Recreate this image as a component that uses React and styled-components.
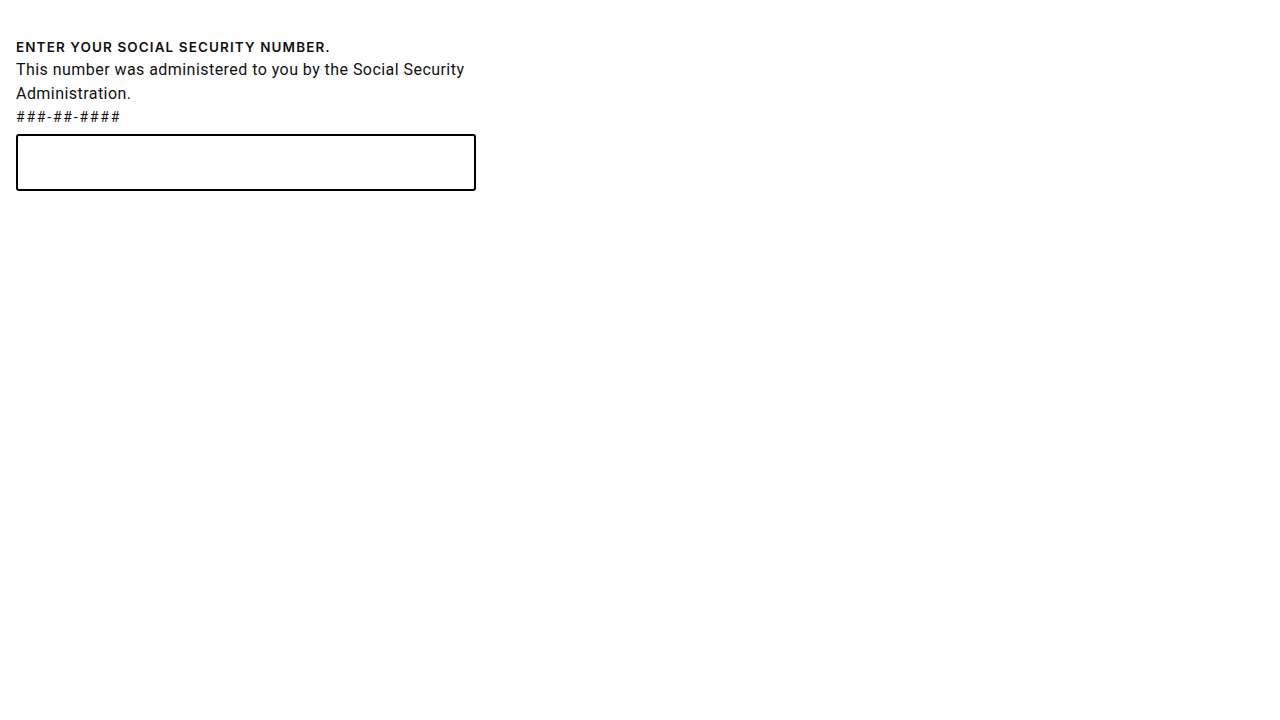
import styled, { createGlobalStyle } from 'styled-components'

const GlobalStyle = createGlobalStyle`
  body {
    margin: 0;
    background: #fff;
    font-family: Roboto, "Liberation Sans", sans-serif;
    color: #111;
  }
`

const App = () => {
  return (
    <>
      <GlobalStyle />
      <Page>
        <Field>
          <Label htmlFor="ssn">Enter your Social Security Number.</Label>
          <Hint>This number was administered to you by the Social Security Administration.</Hint>
          <Format>###-##-####</Format>
          <Input id="ssn" type="text" />
        </Field>
      </Page>
    </>
  )
}
export default App

const Page = styled.div`
  padding: 37px 16px 16px;
`

const Field = styled.div`
  display: flex;
  flex-direction: column;
  width: 460px;
`

const Label = styled.label`
  font-family: Inter, "Open Sans", sans-serif;
  font-size: 13.5px;
  font-weight: 600;
  line-height: 21px;
  text-transform: uppercase;
  letter-spacing: 1.1px;
  color: #111;
`

const Hint = styled.p`
  margin: 0;
  font-size: 16px;
  line-height: 24px;
  letter-spacing: 0.45px;
  color: #111;
`

const Format = styled.span`
  font-size: 14px;
  line-height: 23px;
  letter-spacing: 1.8px;
  color: #111;
`

const Input = styled.input`
  box-sizing: border-box;
  margin-top: 5px;
  width: 460px;
  height: 57px;
  border: 2px solid #000;
  border-radius: 3px;
  padding: 0 12px;
  font-size: 16px;
  font-family: inherit;
  outline: none;
`
